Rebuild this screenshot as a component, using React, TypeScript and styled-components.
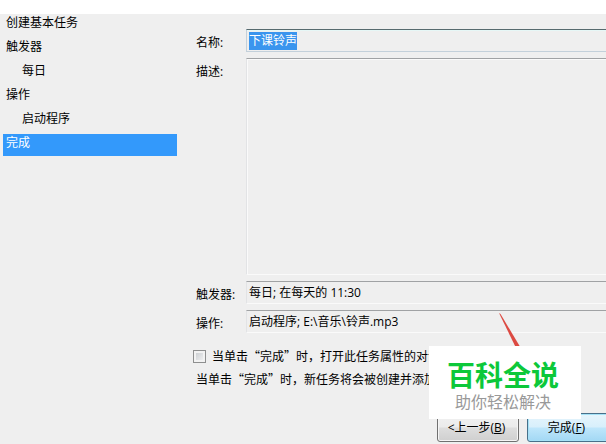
import { useEffect, useRef } from "react";
import styled, { createGlobalStyle } from "styled-components";

const uiFont = `"Open Sans", "Noto Sans CJK SC", sans-serif`;
const cjkFont = `"Noto Sans CJK SC", sans-serif`;

const GlobalStyle = createGlobalStyle`
  * { box-sizing: border-box; }
  body {
    margin: 0;
    background: #efefef;
    color: #000;
    font: 12px/18px ${uiFont};
    overflow: hidden;
  }
`;

const Window = styled.div`
  position: relative;
  display: flex;
  min-height: 100vh;
  border-top: 14px solid #fff;
  overflow: hidden;
`;

const Steps = styled.nav`
  display: flex;
  flex-direction: column;
  gap: 2px;
  flex: 0 0 177px;
  padding-left: 3px;
`;

const Step = styled.a<{ $nested?: boolean; $active?: boolean }>`
  padding: 0 3px 4px ${(p) => (p.$nested ? 19 : 3)}px;
  color: ${(p) => (p.$active ? "#fff" : "#000")};
  background: ${(p) => (p.$active ? "#3399fb" : "transparent")};
  text-decoration: none;
`;

const Form = styled.form`
  display: flex;
  flex-direction: column;
  flex: 1;
  min-width: 0;
  padding: 15px 0 2px 16px;
`;

const Fields = styled.div`
  display: grid;
  grid-template-columns: 50px 1fr;
  grid-template-rows: 23px 1fr 23px 23px;
  row-gap: 6px;
  flex: 1;
  margin-left: 3px;
`;

const Label = styled.label`
  padding-top: 5px;
`;

const field = `
  width: 100%;
  min-width: 0;
  margin: 0;
  padding: 0 2px;
  border: 1px solid #fafafa;
  border-top-color: #a0a2a4;
  border-left-color: #e2e3e5;
  border-right: 0;
  border-radius: 0;
  outline: none;
  background: #efefef;
  color: #000;
  font: 12px/18px ${uiFont};
`;

const ReadOnlyInput = styled.input`
  ${field}
`;

const NameInput = styled.input`
  ${field}
  border-color: #c3d0da;
  border-top-color: #566a6e;
  box-shadow: inset 0 1px #e6f7f6;
  &::selection {
    background: #3a95ee;
    color: #fff;
  }
`;

const Description = styled.textarea`
  ${field}
  height: 100%;
  resize: none;
  box-shadow: inset 1px 1px #fafafa;
`;

const CheckRow = styled.label`
  display: flex;
  align-items: center;
  gap: 6px;
  margin-top: 14px;
  font-family: ${cjkFont};
  white-space: nowrap;
`;

const CheckBox = styled.input`
  appearance: none;
  flex: none;
  width: 13px;
  height: 13px;
  margin: 0;
  border: 1px solid #8e8f8f;
  background: linear-gradient(135deg, #c4c8cc, #f6f6f6);
  box-shadow: inset 0 0 0 2px #f2f2f2;
`;

const Hint = styled.p`
  margin: 5px 0 0 3px;
  font-family: ${cjkFont};
  white-space: nowrap;
`;

const Actions = styled.div`
  display: flex;
  justify-content: flex-end;
  gap: 8px;
  margin: 25px -3px 0 0;
`;

const Button = styled.button<{ $primary?: boolean }>`
  width: 82px;
  height: 29px;
  padding: 0 3px 0 0;
  border: 1px solid ${(p) => (p.$primary ? "#48708a" : "#707070")};
  border-radius: 3px;
  background: ${(p) =>
    p.$primary
      ? "linear-gradient(#e6f5fc 0%, #d8effb 48%, #bee6fb 52%, #a2d8f4 100%)"
      : "linear-gradient(#f2f2f2 0%, #ebebeb 48%, #dddddd 52%, #cfcfcf 100%)"};
  box-shadow: inset 0 0 0 1px ${(p) => (p.$primary ? "#a5e2f7" : "#f5f5f5")};
  color: #000;
  font: 12px/18px ${uiFont};
`;

const Pointer = styled.svg`
  position: absolute;
  right: 84px;
  bottom: 94px;
  width: 24px;
  height: 38px;
`;

const Brand = styled.aside`
  position: absolute;
  right: 25px;
  bottom: 25px;
  width: 152px;
  padding: 12px 4px 7px 0;
  background: #fff;
  font-family: ${cjkFont};
  text-align: center;
`;

const BrandName = styled.div`
  color: #0cc83a;
  font-size: 28px;
  font-weight: 700;
  line-height: 33px;
`;

const Slogan = styled.div`
  color: #999;
  font-size: 16px;
  line-height: 21px;
`;

const steps = [
  { text: "创建基本任务" },
  { text: "触发器" },
  { text: "每日", nested: true },
  { text: "操作" },
  { text: "启动程序", nested: true },
  { text: "完成", active: true },
];

export default function App() {
  const nameRef = useRef<HTMLInputElement>(null);

  useEffect(() => {
    nameRef.current?.focus();
    nameRef.current?.select();
  }, []);

  return (
    <>
      <GlobalStyle />
      <Window>
        <Steps>
          {steps.map((s) => (
            <Step key={s.text} href="#" $nested={s.nested} $active={s.active}>
              {s.text}
            </Step>
          ))}
        </Steps>
        <Form onSubmit={(e) => e.preventDefault()}>
          <Fields>
            <Label htmlFor="name">名称:</Label>
            <NameInput id="name" ref={nameRef} defaultValue="下课铃声" />
            <Label htmlFor="description">描述:</Label>
            <Description id="description" readOnly />
            <Label htmlFor="trigger">触发器:</Label>
            <ReadOnlyInput id="trigger" readOnly value="每日; 在每天的 11:30" />
            <Label htmlFor="action">操作:</Label>
            <ReadOnlyInput id="action" readOnly value="启动程序; E:\音乐\铃声.mp3" />
          </Fields>
          <CheckRow>
            <CheckBox type="checkbox" />
            当单击“完成”时，打开此任务属性的对话框
          </CheckRow>
          <Hint>当单击“完成”时，新任务将会被创建并添加</Hint>
          <Actions>
            <Button type="button">
              &lt;上一步(<u>B</u>)
            </Button>
            <Button type="submit" $primary>
              完成(<u>F</u>)
            </Button>
          </Actions>
        </Form>
        <Pointer viewBox="0 0 24 38" aria-hidden="true">
          <path d="M1 1 L2.5 2 L24 38 L19 38 Z" fill="#dc4a42" />
        </Pointer>
        <Brand>
          <BrandName>百科全说</BrandName>
          <Slogan>助你轻松解决</Slogan>
        </Brand>
      </Window>
    </>
  );
}
